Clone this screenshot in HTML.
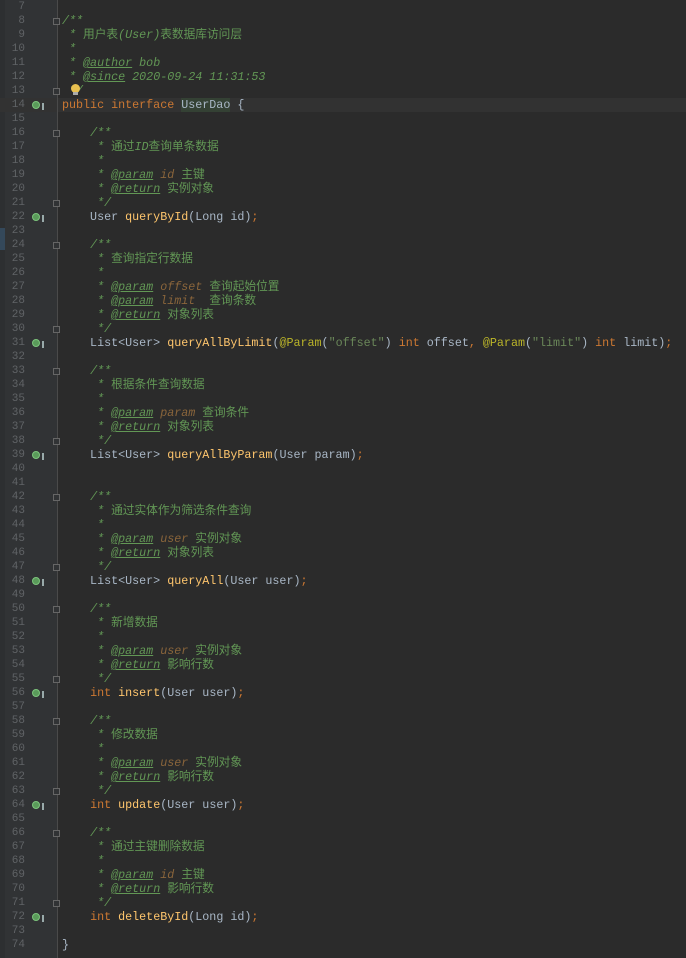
<!DOCTYPE html><html><head><meta charset="utf-8"><style>
html,body{margin:0;padding:0;width:686px;height:958px;overflow:hidden;background:#2b2b2b}
#g{position:absolute;left:0;top:0;width:57px;height:958px;background:#313335}
#s{position:absolute;left:0;top:0;width:5px;height:958px;background:#2d2f31}
#s2{position:absolute;left:0;top:228px;width:5px;height:22px;background:#34485a}
#vl{position:absolute;left:57px;top:0;width:1px;height:958px;background:#4a4a4a}
#hl{position:absolute;left:0;top:98px;width:686px;height:14px;background:#323232}
.ln{position:absolute;left:0;width:25px;text-align:right;font:11px "Liberation Mono",monospace;color:#606366;line-height:14px}
.c{position:absolute;left:62px;font:11.7px "Liberation Mono","Noto Sans CJK SC",monospace;line-height:14px;white-space:pre;color:#a9b7c6}
.d{color:#629755}.di{color:#629755;font-style:italic}.t{color:#629755;text-decoration:underline;font-style:italic}
.p{color:#8a653b;font-style:italic}.k{color:#cc7832}.m{color:#ffc66d}.s{color:#6a8759}.a{color:#bbb529}
.ic{position:absolute;left:32px;width:8px;height:8px;border-radius:50%;background:#5a9a5a;border:1px solid #7cc57c;box-sizing:border-box}
.ic:after{content:"";position:absolute;left:9px;top:1px;width:2px;height:7px;background:#9aa}
.fm{position:absolute;left:53px;width:7px;height:7px;border:1px solid #666;background:#313335;box-sizing:border-box}
</style></head><body>
<div id="g"></div><div id="s"></div><div id="s2"></div><div id="hl"></div><div id="vl"></div>
<div id="lines"></div>
<script>
var L={
8:'<span class="di">/**</span>',
9:'<span class="di"> * </span><span class="d">用户表</span><span class="di">(User)</span><span class="d">表数据库访问层</span>',
10:'<span class="di"> *</span>',
11:'<span class="di"> * </span><span class="t">@author</span><span class="di"> bob</span>',
12:'<span class="di"> * </span><span class="t">@since</span><span class="di"> 2020-09-24 11:31:53</span>',
13:'<span class="di"> */</span>',
14:'<span class="k">public interface </span><span style="background:#344134">UserDao</span> {',
};
var blocks=[
[16,'通过ID查询单条数据',[['param','id','主键'],['return','','实例对象']],'User <span class="m">queryById</span>(Long id)<span class="k">;</span>'],
[24,'查询指定行数据',[['param','offset','查询起始位置'],['param','limit',' 查询条数'],['return','','对象列表']],'List&lt;User&gt; <span class="m">queryAllByLimit</span>(<span class="a">@Param</span>(<span class="s">"offset"</span>) <span class="k">int</span> offset<span class="k">,</span> <span class="a">@Param</span>(<span class="s">"limit"</span>) <span class="k">int</span> limit)<span class="k">;</span>'],
[33,'根据条件查询数据',[['param','param','查询条件'],['return','','对象列表']],'List&lt;User&gt; <span class="m">queryAllByParam</span>(User param)<span class="k">;</span>'],
[42,'通过实体作为筛选条件查询',[['param','user','实例对象'],['return','','对象列表']],'List&lt;User&gt; <span class="m">queryAll</span>(User user)<span class="k">;</span>'],
[50,'新增数据',[['param','user','实例对象'],['return','','影响行数']],'<span class="k">int </span><span class="m">insert</span>(User user)<span class="k">;</span>'],
[58,'修改数据',[['param','user','实例对象'],['return','','影响行数']],'<span class="k">int </span><span class="m">update</span>(User user)<span class="k">;</span>'],
[66,'通过主键删除数据',[['param','id','主键'],['return','','影响行数']],'<span class="k">int </span><span class="m">deleteById</span>(Long id)<span class="k">;</span>']];
var icons=[14],folds=[8,13];
blocks.forEach(function(b){var n=b[0];
L[n]='    <span class="di">/**</span>';folds.push(n);
L[n+1]='<span class="di">     * </span><span class="d">'+(b[1].indexOf('ID')>=0?'通过</span><span class="di">ID</span><span class="d">查询单条数据':b[1])+'</span>';
L[n+2]='<span class="di">     *</span>';
var k=n+3;b[2].forEach(function(t){L[k++]='<span class="di">     * </span><span class="t">@'+t[0]+'</span>'+(t[1]?' <span class="p">'+t[1]+'</span>':'')+'<span class="d"> '+t[2]+'</span>';});
L[k]='<span class="di">     */</span>';folds.push(k);k++;
L[k]='    '+b[3];icons.push(k);});
L[74]='}';
var h='';
for(var n=7;n<=74;n++){var y=(n-7)*14;
h+='<div class="ln" style="top:'+y+'px">'+n+'</div>';
if(L[n])h+='<div class="c" style="top:'+y+'px">'+L[n]+'</div>';}
icons.forEach(function(n){h+='<div class="ic" style="top:'+((n-7)*14+3)+'px"></div>'});
folds.forEach(function(n){h+='<div class="fm" style="top:'+((n-7)*14+4)+'px"></div>'});
h+='<div style="position:absolute;left:71px;top:84px;width:9px;height:9px;border-radius:50%;background:#e8c050"></div><div style="position:absolute;left:73px;top:92px;width:5px;height:3px;background:#aaa"></div>';
document.getElementById('lines').innerHTML=h;
</script>
</body></html>
